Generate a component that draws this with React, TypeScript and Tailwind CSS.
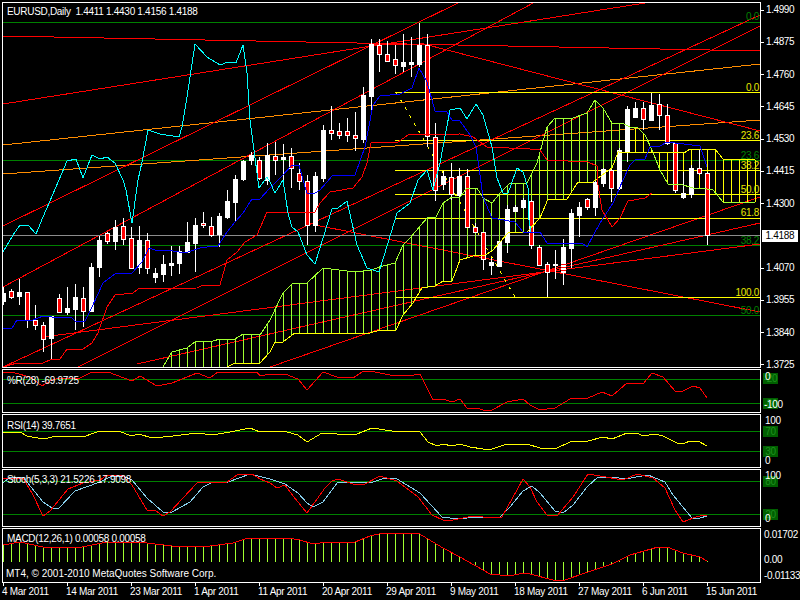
const fontCls = "font-['Liberation_Sans',sans-serif] text-[10px] leading-[12px] tracking-[-0.3px] text-white";

// candles: [bull?, bodyTop, bodyBottom, wickTop, wickBottom], one every 8px starting at x=3
const candles: [number, number, number, number, number][] = [
  [1, 293, 301, 287, 305], [0, 291, 297, 289, 299], [1, 292, 296, 279, 305], [0, 292, 320, 292, 328],
  [0, 320, 325, 305, 330], [0, 325, 339, 322, 352], [1, 316, 338, 316, 359], [0, 298, 312, 294, 313],
  [1, 308, 312, 287, 315], [1, 297, 309, 284, 330], [0, 298, 311, 287, 327], [1, 267, 311, 263, 312],
  [1, 240, 267, 236, 277], [0, 233, 241, 232, 244], [1, 227, 241, 220, 250], [0, 226, 239, 218, 245],
  [0, 238, 268, 227, 268], [1, 240, 267, 226, 274], [0, 240, 268, 233, 274], [1, 273, 277, 268, 283],
  [1, 264, 274, 255, 282], [1, 263, 265, 246, 276], [1, 251, 263, 246, 274], [1, 242, 252, 222, 253],
  [1, 225, 243, 218, 272], [0, 223, 225, 212, 228], [0, 226, 235, 217, 237], [1, 216, 234, 213, 247],
  [1, 201, 217, 190, 219], [1, 179, 202, 175, 221], [1, 161, 179, 160, 181], [1, 155, 160, 152, 165],
  [0, 160, 178, 157, 180], [1, 155, 180, 143, 185], [0, 156, 160, 142, 175], [1, 157, 159, 144, 187],
  [0, 156, 168, 148, 188], [0, 173, 181, 163, 190], [0, 181, 225, 175, 245], [1, 176, 225, 172, 232],
  [1, 130, 178, 125, 182], [0, 130, 133, 106, 140], [0, 131, 135, 123, 139], [0, 131, 135, 118, 142],
  [0, 135, 138, 112, 151], [1, 95, 139, 87, 143], [1, 44, 96, 39, 110], [0, 45, 54, 39, 72],
  [0, 54, 61, 41, 62], [0, 59, 65, 45, 74], [1, 62, 66, 34, 72], [1, 62, 64, 37, 77],
  [1, 45, 64, 23, 67], [0, 45, 136, 34, 147], [0, 137, 190, 123, 201], [1, 176, 184, 171, 190],
  [0, 177, 194, 163, 200], [1, 176, 195, 168, 197], [0, 176, 227, 169, 228], [0, 227, 232, 223, 232],
  [0, 232, 259, 232, 270], [1, 262, 265, 258, 275], [1, 241, 266, 241, 266], [1, 209, 242, 205, 253],
  [1, 207, 211, 205, 212], [1, 200, 207, 198, 209], [0, 201, 245, 200, 249], [0, 247, 265, 245, 266],
  [0, 264, 272, 262, 297], [1, 264, 265, 250, 279], [1, 247, 272, 239, 285], [1, 213, 248, 209, 268],
  [1, 207, 215, 202, 237], [0, 199, 207, 198, 210], [1, 182, 207, 180, 216], [1, 169, 183, 168, 187],
  [0, 170, 188, 168, 202], [1, 150, 188, 148, 190], [1, 109, 151, 106, 162], [1, 108, 117, 102, 118],
  [0, 108, 119, 102, 130], [1, 105, 120, 93, 121], [0, 104, 115, 94, 130], [0, 115, 143, 104, 145],
  [0, 143, 190, 143, 193], [1, 193, 197, 172, 199], [1, 168, 194, 165, 198], [0, 168, 173, 150, 175],
  [0, 173, 235, 172, 245],
];

const cyan = "3,252 13,235 20,225 28,225 36,234 43,217 59,180 67,161 76,159 83,178 92,155 100,159 107,157 115,163 123,180 126,190 132,223 138,180 142,162 148,130 160,134 179,137 182,127 187,97 195,44 207,57 220,65 228,62 236,63 243,45 247,73 250,120 257,173 259,188 267,177 270,182 275,193 283,180 288,213 292,227 298,232 307,255 315,264 332,209 338,208 347,201 357,245 367,268 379,272 388,243 397,213 410,203 418,180 427,170 433,190 440,163 450,110 460,108 467,119 476,104 483,115 492,147 497,178 503,193 508,193 511,185 517,168 523,172 528,188 528,213 531,233";
const blue = "3,328 12,328 17,320 33,320 43,316 52,317 72,318 75,321 85,321 92,307 103,283 115,274 132,273 142,262 149,248 155,250 173,251 185,253 200,248 207,247 218,246 227,232 235,222 243,213 252,199 260,199 270,188 282,176 292,165 299,165 305,187 307,193 315,193 320,190 333,175 355,175 365,147 373,105 380,96 400,94 412,88 419,68 427,82 435,111 447,112 452,120 460,121 470,135 476,147 480,175 483,197 492,218 515,222 523,232 540,232 547,243 582,243 587,247 600,223 613,203 623,180 630,165 635,160 645,159 650,147 660,146 667,142 700,146 707,167";
const redStep = "3,367 17,363 43,363 52,359 60,359 67,349 83,349 92,343 98,333 107,307 115,295 133,293 138,289 197,288 203,285 220,285 227,260 237,252 245,242 257,235 267,212 315,212 320,203 330,192 342,190 353,188 362,177 367,163 371,143 398,142 408,135 460,134 473,137 487,147 530,149 540,150 547,160 588,162 597,166 598,185 602,210 612,227 620,218 628,201 645,198 652,193";
const lime = "163,367 172,352 187,348 195,342 213,341 220,339 235,339 243,334 260,335 270,320 283,293 292,284 307,283 323,268 355,272 372,270 379,267 395,263 403,245 410,238 427,218 436,217 443,203 452,197 460,197 467,188 477,188 483,198 492,203 500,193 510,183 527,183 537,163 547,127 555,118 573,118 587,113 595,100 603,108 612,123 622,123 630,127 637,127 645,135 652,150 660,170 668,184 680,184 693,188 700,188 713,190 723,202 755,202";
const yellow = "227,367 235,363 260,363 270,352 275,342 283,342 295,333 370,333 380,330 396,330 403,315 413,303 422,288 435,286 443,281 452,281 460,260 473,256 485,255 492,251 508,233 527,232 540,218 548,199 567,199 578,182 593,182 602,175 612,168 618,152 684,153 690,149 715,149 723,159 755,160";

const pctR = "3,372 15,373 30,377 42,386 52,380 60,378 80,378 92,372 108,372 132,381 140,376 157,386 172,383 197,373 210,378 218,372 227,373 233,372 257,372 260,376 270,374 285,374 298,379 307,390 323,372 337,377 353,378 362,372 370,371 390,375 408,376 420,374 433,400 443,399 452,402 460,399 467,408 477,408 483,410 492,410 507,402 523,399 530,405 540,410 555,408 570,399 588,398 602,392 612,396 627,383 643,384 652,373 663,377 675,391 683,391 693,386 700,388 707,398";
const rsi = "3,432 20,432 27,436 43,439 57,436 80,436 83,437 97,432 112,431 118,431 132,436 138,434 153,438 173,436 197,433 212,435 230,432 250,428 260,432 270,431 287,432 298,435 307,442 322,433 337,434 357,434 372,428 392,431 415,431 420,432 428,442 437,446 443,444 452,446 460,444 470,447 483,449 492,449 507,444 527,444 540,448 557,448 570,442 588,441 603,437 612,439 627,433 637,433 643,436 655,434 663,436 677,443 685,443 690,441 698,441 707,446";
const stochMain = "3,478 23,478 33,495 43,516 50,511 68,489 83,483 100,480 107,475 123,476 132,485 147,510 155,510 163,516 170,512 183,498 197,483 227,482 237,475 252,474 260,479 270,483 277,488 285,485 293,496 307,513 325,488 332,481 338,479 353,484 365,484 380,476 397,481 418,497 432,515 443,520 453,520 473,516 492,518 502,517 523,479 530,487 537,502 547,515 557,516 573,497 588,474 600,476 623,480 637,474 653,478 665,488 675,510 683,522 693,518 703,515 707,516";
const stochSignal = "3,483 10,477 23,477 43,502 52,508 59,508 75,491 100,482 112,476 123,476 132,480 147,498 163,512 172,512 190,502 203,487 213,482 228,482 250,474 270,479 285,484 298,493 307,503 313,507 323,502 338,482 357,482 370,483 385,478 397,479 420,493 442,517 458,519 477,517 500,517 510,507 523,491 532,486 540,493 555,511 563,513 573,505 587,487 598,477 613,477 625,479 648,475 665,482 673,495 692,518 700,518 707,516";
const macd = "3,545 20,542 43,547 82,547 107,542 147,543 180,547 210,546 233,543 248,538 270,538 287,538 300,540 313,544 328,542 355,542 370,536 383,533 418,533 443,548 460,557 490,574 510,576 523,573 530,574 553,580 565,580 588,572 612,564 630,555 658,547 667,547 683,553 700,557 707,561";

// trend lines and channels: [x1, y1, x2, y2, colour]
const objects: [number, number, number, number, string][] = [
  [3, 36, 760, 51, "#ff0000"],
  [3, 104, 645, 3, "#ff0000"],
  [3, 145, 760, 64, "#ff8c00"],
  [3, 174, 760, 120, "#ff8c00"],
  [3, 226, 460, 2, "#ff0000"],
  [3, 287, 535, 2, "#ff0000"],
  [3, 367, 760, 15, "#ff0000"],
  [78, 367, 760, 26, "#ff0000"],
  [43, 337, 760, 244, "#ff0000"],
  [137, 364, 760, 223, "#ff0000"],
  [270, 367, 760, 197, "#ff0000"],
  [420, 43, 760, 131, "#ff0000"],
  [315, 225, 760, 312, "#ff0000"],
  [371, 44, 428, 44, "#ff0000"],
];
const greenLevels = [22, 160, 245, 315];
const fiboLevels = [92, 140, 170, 194, 218, 297];

const fiboLabels: [string, string, string][] = [
  ["0.0", "top-[8px]", "text-[#008000]"],
  ["0.0", "top-[79px]", "text-[#e8e800]"],
  ["23.6", "top-[127px]", "text-[#e8e800]"],
  ["23.6", "top-[147px]", "text-[#008000]"],
  ["38.2", "top-[157px]", "text-[#e8e800]"],
  ["50.0", "top-[181px]", "text-[#e8e800]"],
  ["61.8", "top-[204px]", "text-[#e8e800]"],
  ["38.2", "top-[232px]", "text-[#008000]"],
  ["100.0", "top-[284px]", "text-[#e8e800]"],
  ["50.0", "top-[302px]", "text-[#008000]"],
];

const prices = ["1.4990", "1.4875", "1.4760", "1.4645", "1.4530", "1.4415", "1.4300", "1.4188", "1.4070", "1.3955", "1.3840", "1.3725"];
const dates = ["4 Mar 2011", "14 Mar 2011", "23 Mar 2011", "1 Apr 2011", "11 Apr 2011", "20 Apr 2011", "29 Apr 2011", "9 May 2011", "18 May 2011", "27 May 2011", "6 Jun 2011", "15 Jun 2011"];

function parse(points: string) {
  return points.split(" ").map((p) => p.split(",").map(Number));
}

function yAt(points: number[][], x: number) {
  if (x <= points[0][0]) return points[0][1];
  for (let i = 1; i < points.length; i++) {
    const [x0, y0] = points[i - 1];
    const [x1, y1] = points[i];
    if (x <= x1) return y0 + ((y1 - y0) * (x - x0)) / (x1 - x0 || 1);
  }
  return points[points.length - 1][1];
}

function Line({ points, color }: { points: string; color: string }) {
  return <polyline points={points} fill="none" stroke={color} strokeWidth="1" />;
}

function HLine({ y, x1 = 3, color }: { y: number; x1?: number; color: string }) {
  return <rect x={x1} y={y} width={760 - x1} height="1" fill={color} />;
}

function Candles() {
  return (
    <g>
      {candles.map(([bull, top, bottom, wickTop, wickBottom], i) => {
        const x = 3 + 8 * i;
        return (
          <g key={i}>
            <rect x={x} y={wickTop} width="1" height={wickBottom - wickTop} fill="#fff" />
            <rect x={x - 2} y={top} width="5" height={bottom - top + 1} fill="#fff" />
            {!bull && bottom - top > 1 && <rect x={x - 1} y={top + 1} width="3" height={bottom - top - 1} fill="#ff0000" />}
          </g>
        );
      })}
      <rect x="561" y="264" width="5" height="1" fill="#ff0000" />
      <rect x="561" y="267" width="5" height="1" fill="#ff0000" />
      <rect x="561" y="270" width="5" height="1" fill="#ff0000" />
    </g>
  );
}

function PriceChart() {
  const upper = parse(lime);
  const lower = parse(yellow);
  const bars = Array.from({ length: 74 }, (_, i) => 171 + 8 * i);
  return (
    <svg viewBox="3 3 757 364" width="757" height="364" shapeRendering="crispEdges" className="block">
      {greenLevels.map((y) => <HLine key={y} y={y} color="#008000" />)}
      {objects.map(([x1, y1, x2, y2, color], i) => (
        <line key={i} x1={x1} y1={y1} x2={x2} y2={y2} stroke={color} strokeWidth="1" />
      ))}
      {fiboLevels.map((y) => <HLine key={y} y={y} x1={395} color="#ffff00" />)}
      <line x1="396" y1="92" x2="515" y2="297" stroke="#ffff00" strokeWidth="1" strokeDasharray="3 6" />
      <HLine y={235} color="#8c8c8c" />
      {bars.map((x) => {
        const y1 = yAt(upper, x);
        const y2 = yAt(lower, x);
        return <rect key={x} x={x} y={Math.min(y1, y2)} width="1" height={Math.abs(y2 - y1)} fill={x > 619 ? "#ffff00" : "#a0ff30"} />;
      })}
      <Candles />
      <Line points={lime} color="#a0ff30" />
      <Line points={yellow} color="#ffff00" />
      <Line points={redStep} color="#ff0000" />
      <Line points={cyan} color="#00ffff" />
      <Line points={blue} color="#0000ff" />
    </svg>
  );
}

function SubChart({ top, height, children }: { top: number; height: number; children: React.ReactNode }) {
  return (
    <svg viewBox={`3 ${top} 757 ${height}`} width="757" height={height} shapeRendering="crispEdges" className="block">
      {children}
    </svg>
  );
}

function MacdBars() {
  const signal = parse(macd);
  const bars = Array.from({ length: 89 }, (_, i) => 3 + 8 * i);
  return (
    <g>
      {bars.map((x) => {
        const y = yAt(signal, x);
        return <rect key={x} x={x} y={Math.min(y, 562)} width="1" height={Math.abs(562 - y)} fill="#a0ff30" />;
      })}
    </g>
  );
}

function LevelBox({ text, className }: { text: string; className: string }) {
  return (
    <span className={`absolute left-[2px] w-[15px] h-[11px] bg-[#005f00] text-[#1f8f1f] text-center ${className}`}>
      {text}
    </span>
  );
}

function Scale({ text, className }: { text: string; className: string }) {
  return <span className={`absolute whitespace-nowrap ${className}`}>{text}</span>;
}

function Panel({ height, axis, children }: { height: string; axis: React.ReactNode; children: React.ReactNode }) {
  return (
    <div className={`flex ${height}`}>
      <div className="relative w-[759px] border border-white">{children}</div>
      <div className="relative w-[39px]">{axis}</div>
    </div>
  );
}

export default function App() {
  return (
    <div className={`w-[800px] h-[600px] overflow-hidden bg-black pt-[2px] pl-[2px] flex flex-col gap-px ${fontCls}`}>
      <Panel
        height="h-[366px]"
        axis={
          <div className="mt-[2px] h-[367px] flex flex-col justify-between">
            {prices.map((p) =>
              p === "1.4188" ? (
                <div key={p} className="flex items-center h-3">
                  <span className="ml-px h-[12px] w-[36px] bg-white text-black text-center">{p}</span>
                </div>
              ) : (
                <div key={p} className="flex items-center h-3">
                  <span className="w-[3px] h-px bg-white" />
                  <span className="ml-[2px] tracking-[-0.4px]">{p}</span>
                </div>
              ),
            )}
          </div>
        }
      >
        <PriceChart />
        <span className="absolute left-[4px] top-[3px] whitespace-pre">EURUSD,Daily  1.4411 1.4430 1.4156 1.4188</span>
        {fiboLabels.map(([text, top, color]) => (
          <span key={top} className={`absolute right-[1px] ${top} ${color}`}>{text}</span>
        ))}
      </Panel>

      <Panel
        height="h-[44px]"
        axis={
          <>
            <LevelBox text="-20" className="top-[4px]" />
            <Scale text="0" className="left-[4px] top-[2px]" />
            <LevelBox text="-80" className="top-[29px]" />
            <Scale text="-100" className="left-[3px] top-[30px]" />
          </>
        }
      >
        <SubChart top={370} height={42}>
          <HLine y={379} color="#008000" />
          <HLine y={403} color="#008000" />
          <Line points={pctR} color="#ff0000" />
        </SubChart>
        <span className="absolute left-[4px] top-[5px]">%R(28) -69.9725</span>
      </Panel>

      <Panel
        height="h-[54px]"
        axis={
          <>
            <Scale text="100" className="left-[4px] top-[1px]" />
            <LevelBox text="70" className="top-[12px]" />
            <LevelBox text="30" className="top-[32px]" />
            <Scale text="0" className="left-[4px] top-[41px]" />
          </>
        }
      >
        <SubChart top={415} height={52}>
          <HLine y={431} color="#008000" />
          <HLine y={451} color="#008000" />
          <Line points={rsi} color="#ffff00" />
        </SubChart>
        <span className="absolute left-[4px] top-[5px]">RSI(14) 39.7651</span>
      </Panel>

      <Panel
        height="h-[58px]"
        axis={
          <>
            <LevelBox text="80" className="top-[7px]" />
            <Scale text="100" className="left-[4px] top-[1px]" />
            <LevelBox text="20" className="top-[40px]" />
            <Scale text="0" className="left-[4px] top-[44px]" />
          </>
        }
      >
        <SubChart top={470} height={56}>
          <HLine y={481} color="#008000" />
          <HLine y={514} color="#008000" />
          <Line points={stochSignal} color="#87ceeb" />
          <Line points={stochMain} color="#ff0000" />
        </SubChart>
        <span className="absolute left-[4px] top-[4px]">Stoch(5,3,3) 21.5226 17.9098</span>
      </Panel>

      <Panel
        height="h-[55px]"
        axis={
          <>
            <Scale text="0.01702" className="left-[3px] top-[1px]" />
            <Scale text="0.00" className="left-[3px] top-[26px]" />
            <Scale text="-0.01133" className="left-[3px] top-[42px]" />
          </>
        }
      >
        <SubChart top={529} height={53}>
          <MacdBars />
          <Line points={macd} color="#ff0000" />
        </SubChart>
        <span className="absolute left-[4px] top-[4px]">MACD(12,26,1) 0.00058 0.00058</span>
        <span className="absolute left-[3px] top-[39px] tracking-normal">MT4, © 2001-2010 MetaQuotes Software Corp.</span>
      </Panel>

      <div className="flex ml-px -mt-px">
        {dates.map((d) => (
          <div key={d} className="w-[64px] shrink-0">
            <div className="w-px h-[3px] bg-white" />
            <div className="-ml-px whitespace-nowrap">{d}</div>
          </div>
        ))}
      </div>
    </div>
  );
}
